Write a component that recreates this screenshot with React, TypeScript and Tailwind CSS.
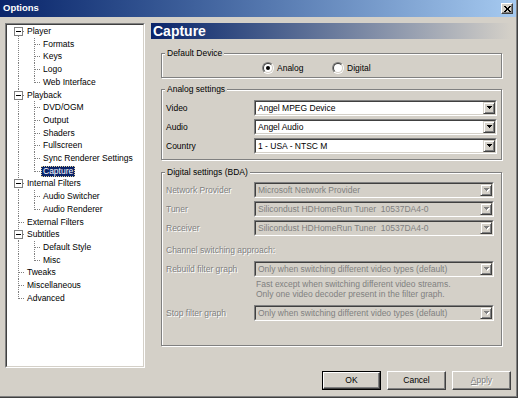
import React from "react";

type TreeItem = {
    label: string;
    level: 0 | 1;
    h: number;
    hc: string;
    box?: boolean;
    first?: boolean;
    last?: boolean;
    end?: boolean;
    selected?: boolean;
};

const tree: TreeItem[] = [
    { label: "Player", level: 0, h: 13, hc: "h-[13px]", box: true, first: true },
    { label: "Formats", level: 1, h: 12, hc: "h-[12px]" },
    { label: "Keys", level: 1, h: 13, hc: "h-[13px]" },
    { label: "Logo", level: 1, h: 13, hc: "h-[13px]" },
    { label: "Web Interface", level: 1, h: 13, hc: "h-[13px]", last: true },
    { label: "Playback", level: 0, h: 12, hc: "h-[12px]", box: true },
    { label: "DVD/OGM", level: 1, h: 13, hc: "h-[13px]" },
    { label: "Output", level: 1, h: 13, hc: "h-[13px]" },
    { label: "Shaders", level: 1, h: 12, hc: "h-[12px]" },
    { label: "Fullscreen", level: 1, h: 13, hc: "h-[13px]" },
    { label: "Sync Renderer Settings", level: 1, h: 13, hc: "h-[13px]" },
    { label: "Capture", level: 1, h: 12, hc: "h-[12px]", last: true, selected: true },
    { label: "Internal Filters", level: 0, h: 13, hc: "h-[13px]", box: true },
    { label: "Audio Switcher", level: 1, h: 13, hc: "h-[13px]" },
    { label: "Audio Renderer", level: 1, h: 13, hc: "h-[13px]", last: true },
    { label: "External Filters", level: 0, h: 12, hc: "h-[12px]" },
    { label: "Subtitles", level: 0, h: 13, hc: "h-[13px]", box: true },
    { label: "Default Style", level: 1, h: 13, hc: "h-[13px]" },
    { label: "Misc", level: 1, h: 12, hc: "h-[12px]", last: true },
    { label: "Tweaks", level: 0, h: 13, hc: "h-[13px]" },
    { label: "Miscellaneous", level: 0, h: 13, hc: "h-[13px]" },
    { label: "Advanced", level: 0, h: 13, hc: "h-[13px]", end: true },
];

const dot = { stroke: "#808080", strokeWidth: 1, strokeDasharray: "1 1" };

const TreeLines = ({ item }: { item: TreeItem }) => {
    const c = 6.5;
    if (item.level === 0) {
        return (
            <svg width="18" height={item.h} shapeRendering="crispEdges" className="shrink-0">
                <line x1="11.5" y1={item.first ? c : 0} x2="11.5" y2={item.end ? c : item.h} {...dot} />
                <line x1={item.box ? 16 : 12} y1={c} x2="18" y2={c} {...dot} />
                {item.box && (
                    <>
                        <rect x="7.5" y="2.5" width="8" height="8" fill="#fff" stroke="#808080" />
                        <rect x="9" y="6" width="5" height="1" fill="#000" />
                    </>
                )}
            </svg>
        );
    }
    return (
        <svg width="34" height={item.h} shapeRendering="crispEdges" className="shrink-0">
            <line x1="11.5" y1="0" x2="11.5" y2={item.h} {...dot} />
            <line x1="27.5" y1="0" x2="27.5" y2={item.last ? c : item.h} {...dot} />
            <line x1="28" y1={c} x2="34" y2={c} {...dot} />
        </svg>
    );
};

const DropArrow = ({ disabled }: { disabled?: boolean }) => (
    <svg width="6" height="4" shapeRendering="crispEdges">
        {disabled && (
            <g fill="#fff">
                <rect x="1" y="1" width="5" height="1" />
                <rect x="2" y="2" width="3" height="1" />
                <rect x="3" y="3" width="1" height="1" />
            </g>
        )}
        <g fill={disabled ? "#808080" : "#000"}>
            <rect x="0" y="0" width="5" height="1" />
            <rect x="1" y="1" width="3" height="1" />
            <rect x="2" y="2" width="1" height="1" />
        </g>
    </svg>
);

const Combo = ({ value, disabled }: { value: string; disabled?: boolean }) => (
    <div
        className={`${disabled ? "w-[240px]" : "w-[243px]"} h-[16px] border border-t-[#808080] border-l-[#808080] border-b-white border-r-white`}
    >
        <div
            className={`h-full flex border border-t-[#404040] border-l-[#404040] border-b-[#d4d0c8] border-r-[#d4d0c8] ${
                disabled ? "bg-[#d4d0c8] text-[#808080]" : "bg-white text-black"
            }`}
        >
            <span className="flex-1 pl-[2px] leading-[12px] whitespace-pre overflow-hidden">{value}</span>
            <div className="w-[12px] h-full flex items-center justify-center pl-[1px] bg-[#d4d0c8] border border-t-[#d4d0c8] border-l-[#d4d0c8] border-b-[#404040] border-r-[#404040] shadow-[inset_1px_1px_0_#fff,inset_-1px_-1px_0_#808080]">
                <DropArrow disabled={disabled} />
            </div>
        </div>
    </div>
);

const Radio = ({ label, checked, wide }: { label: string; checked?: boolean; wide?: boolean }) => (
    <div className={`flex items-center ${wide ? "w-[70px]" : ""}`}>
        <span className="w-[12px] h-[12px] rounded-full border border-t-[#808080] border-l-[#808080] border-b-white border-r-white">
            <span className="w-full h-full rounded-full flex items-center justify-center bg-white border border-t-[#404040] border-l-[#404040] border-b-[#d4d0c8] border-r-[#d4d0c8]">
                {checked && <span className="w-[4px] h-[4px] rounded-full bg-black" />}
            </span>
        </span>
        <span className="ml-[3px]">{label}</span>
    </div>
);

const Group = ({ title, className, children }: { title: string; className?: string; children: React.ReactNode }) => (
    <fieldset className={`w-[341px] border border-[#808080] shadow-[1px_1px_0_#fff,inset_1px_1px_0_#fff] ${className ?? ""}`}>
        <legend className="ml-[3px] px-[2px] leading-[10px] bg-[#d4d0c8]">{title}</legend>
        {children}
    </fieldset>
);

const Row = ({ label, value, disabled }: { label: string; value: string; disabled?: boolean }) => (
    <div className="flex items-center h-[16px]">
        <span className={`w-[88px] whitespace-nowrap ${disabled ? "text-[#808080] [text-shadow:1px_1px_0_#fff]" : ""}`}>
            {label}
        </span>
        <Combo value={value} disabled={disabled} />
    </div>
);

const Button = ({ children, isDefault, disabled }: { children: React.ReactNode; isDefault?: boolean; disabled?: boolean }) => (
    <div className={`w-[59px] h-[19px] ${isDefault ? "border border-black" : ""}`}>
        <div
            className={`w-full h-full flex items-center justify-center border border-t-white border-l-white border-b-[#404040] border-r-[#404040] shadow-[inset_-1px_-1px_0_#808080] ${
                disabled ? "text-[#808080] [text-shadow:1px_1px_0_#fff]" : ""
            }`}
        >
            {children}
        </div>
    </div>
);

export default function App() {
    return (
        <div className="w-[518px] h-[398px] overflow-hidden border-r border-b border-[#404040] font-['Liberation_Sans',Arial,sans-serif] text-[8.5px] text-black">
            <div className="w-full h-full flex flex-col bg-[#d4d0c8] border-r border-b border-[#808080]">
                {/* title bar */}
                <div className="h-[17px] shrink-0 flex items-center justify-between pl-[3px] pr-[3px] bg-linear-to-r from-[#0a246a] to-[#a6caf0]">
                    <span className="text-white font-bold text-[9.5px]">Options</span>
                    <div className="w-[12px] h-[11px] flex items-center justify-center bg-[#d4d0c8] border border-t-white border-l-white border-b-[#404040] border-r-[#404040] shadow-[inset_-1px_-1px_0_#808080]">
                        <svg width="7" height="6" shapeRendering="crispEdges">
                            <path d="M0 0h2v1H0zM5 0h2v1H5zM1 1h2v1H1zM4 1h2v1H4zM2 2h3v2H2zM1 4h2v1H1zM4 4h2v1H4zM0 5h2v1H0zM5 5h2v1H5z" fill="#000" />
                        </svg>
                    </div>
                </div>

                <div className="flex mt-[6px]">
                    {/* tree */}
                    <div className="ml-[5px] w-[140px] h-[345px] border border-t-[#808080] border-l-[#808080] border-b-white border-r-white">
                        <div className="w-full h-full bg-white border border-t-[#404040] border-l-[#404040] border-b-[#d4d0c8] border-r-[#d4d0c8]">
                            {tree.map((item) => (
                                <div key={item.label} className={`${item.hc} flex items-center`}>
                                    <TreeLines item={item} />
                                    <span
                                        className={`px-[2px] h-[11px] leading-[11px] whitespace-nowrap ${
                                            item.selected
                                                ? "bg-[#0a246a] text-white outline-1 outline-dotted -outline-offset-1 outline-[#e8d8a0]"
                                                : ""
                                        }`}
                                    >
                                        {item.label}
                                    </span>
                                </div>
                            ))}
                        </div>
                    </div>

                    {/* page */}
                    <div className="ml-[6px] w-[360px] flex flex-col">
                        <div className="h-[16px] pl-[2px] text-white font-bold text-[14px] leading-[16px] bg-linear-to-r from-[#0a246a] to-[#d4d0c8]">
                            Capture
                        </div>

                        <div className="ml-[10px] flex flex-col">
                            <Group title="Default Device" className="mt-[9px]">
                                <div className="flex items-center h-[12px] mt-[4px] mb-[3px] pl-[100px]">
                                    <Radio label="Analog" checked wide />
                                    <Radio label="Digital" />
                                </div>
                            </Group>

                            <Group title="Analog settings" className="mt-[6px]">
                                <div className="flex flex-col gap-[3px] pl-[4px] pt-[6px] pb-[5px]">
                                    <Row label="Video" value="Angel MPEG Device" />
                                    <Row label="Audio" value="Angel Audio" />
                                    <Row label="Country" value="1 - USA - NTSC M" />
                                </div>
                            </Group>

                            <Group title="Digital settings (BDA)" className="mt-[7px]">
                                <div className="flex flex-col pl-[4px] pt-[5px] pb-[24px]">
                                    <div className="flex flex-col gap-[3px]">
                                        <Row label="Network Provider" value="Microsoft Network Provider" disabled />
                                        <Row label="Tuner" value="Silicondust HDHomeRun Tuner  10537DA4-0" disabled />
                                        <Row label="Receiver" value="Silicondust HDHomeRun Tuner  10537DA4-0" disabled />
                                    </div>
                                    <div className="mt-[8px] h-[12px] leading-[12px] text-[#808080] [text-shadow:1px_1px_0_#fff]">
                                        Channel switching approach:
                                    </div>
                                    <div className="mt-[5px]">
                                        <Row label="Rebuild filter graph" value="Only when switching different video types (default)" disabled />
                                    </div>
                                    <div className="mt-[2px] ml-[90px] leading-[10px] text-[#808080]">
                                        <div>Fast except when switching different video streams.</div>
                                        <div>Only one video decoder present in the filter graph.</div>
                                    </div>
                                    <div className="mt-[6px]">
                                        <Row label="Stop filter graph" value="Only when switching different video types (default)" disabled />
                                    </div>
                                </div>
                            </Group>
                        </div>
                    </div>
                </div>

                {/* buttons */}
                <div className="flex justify-end gap-[6px] pr-[5px] mt-[3px]">
                    <Button isDefault>OK</Button>
                    <Button>Cancel</Button>
                    <Button disabled>
                        <span>
                            <span className="underline">A</span>pply
                        </span>
                    </Button>
                </div>
            </div>
        </div>
    );
}
